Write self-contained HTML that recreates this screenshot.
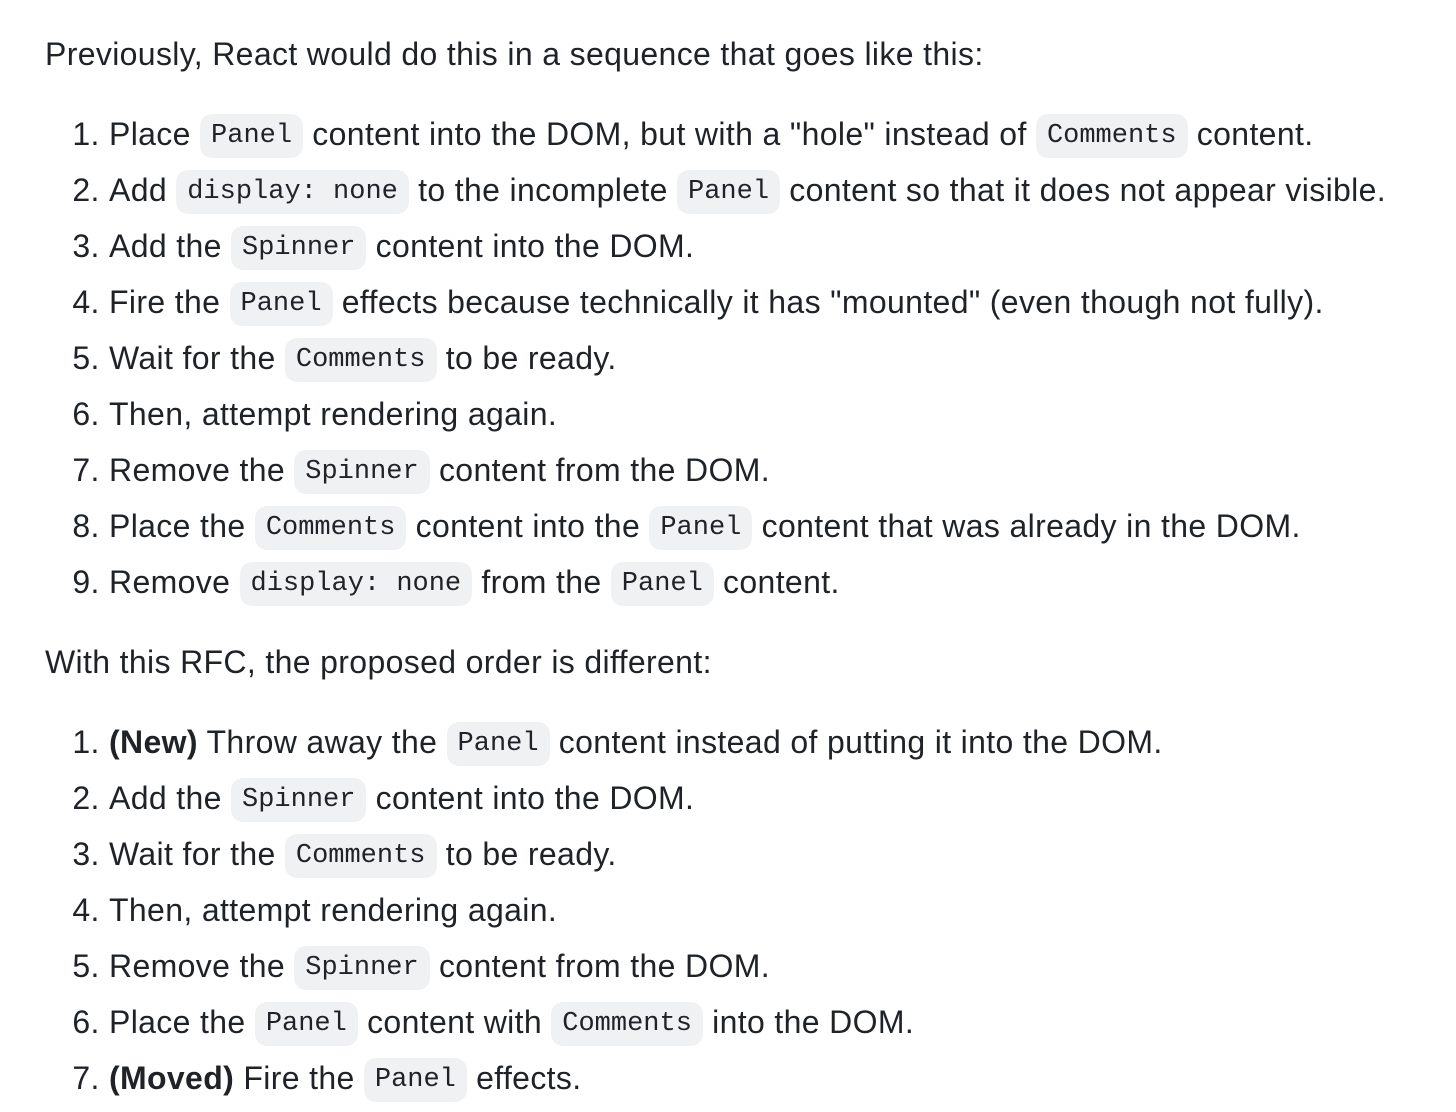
<!DOCTYPE html>
<html><head><meta charset="utf-8"><style>
html,body{margin:0;padding:0;background:#fff}
body{width:1456px;height:1112px;overflow:hidden;font-family:"Liberation Sans",Helvetica,Arial,sans-serif;font-size:32px;line-height:48px;color:#1f2328;padding:30px 0 0 45px;box-sizing:border-box;letter-spacing:0.35px}
p{margin:0 0 32px 0}
ol{margin:0 0 32px 0;padding-left:64px}
li{height:48px}
li+li{margin-top:8px}
code{font-family:"Liberation Mono","DejaVu Sans Mono",monospace;font-size:27px;line-height:1;background:#eff1f3;border-radius:12px;padding:7px 11px;vertical-align:3px;letter-spacing:0}
b{font-weight:700}
</style></head><body>
<p>Previously, React would do this in a sequence that goes like this:</p>
<ol>
<li>Place <code>Panel</code> content into the DOM, but with a "hole" instead of <code>Comments</code> content.</li>
<li>Add <code>display: none</code> to the incomplete <code>Panel</code> content so that it does not appear visible.</li>
<li>Add the <code>Spinner</code> content into the DOM.</li>
<li>Fire the <code>Panel</code> effects because technically it has "mounted" (even though not fully).</li>
<li>Wait for the <code>Comments</code> to be ready.</li>
<li>Then, attempt rendering again.</li>
<li>Remove the <code>Spinner</code> content from the DOM.</li>
<li>Place the <code>Comments</code> content into the <code>Panel</code> content that was already in the DOM.</li>
<li>Remove <code>display: none</code> from the <code>Panel</code> content.</li>
</ol>
<p>With this RFC, the proposed order is different:</p>
<ol>
<li><b>(New)</b> Throw away the <code>Panel</code> content instead of putting it into the DOM.</li>
<li>Add the <code>Spinner</code> content into the DOM.</li>
<li>Wait for the <code>Comments</code> to be ready.</li>
<li>Then, attempt rendering again.</li>
<li>Remove the <code>Spinner</code> content from the DOM.</li>
<li>Place the <code>Panel</code> content with <code>Comments</code> into the DOM.</li>
<li><b>(Moved)</b> Fire the <code>Panel</code> effects.</li>
</ol>
</body></html>
